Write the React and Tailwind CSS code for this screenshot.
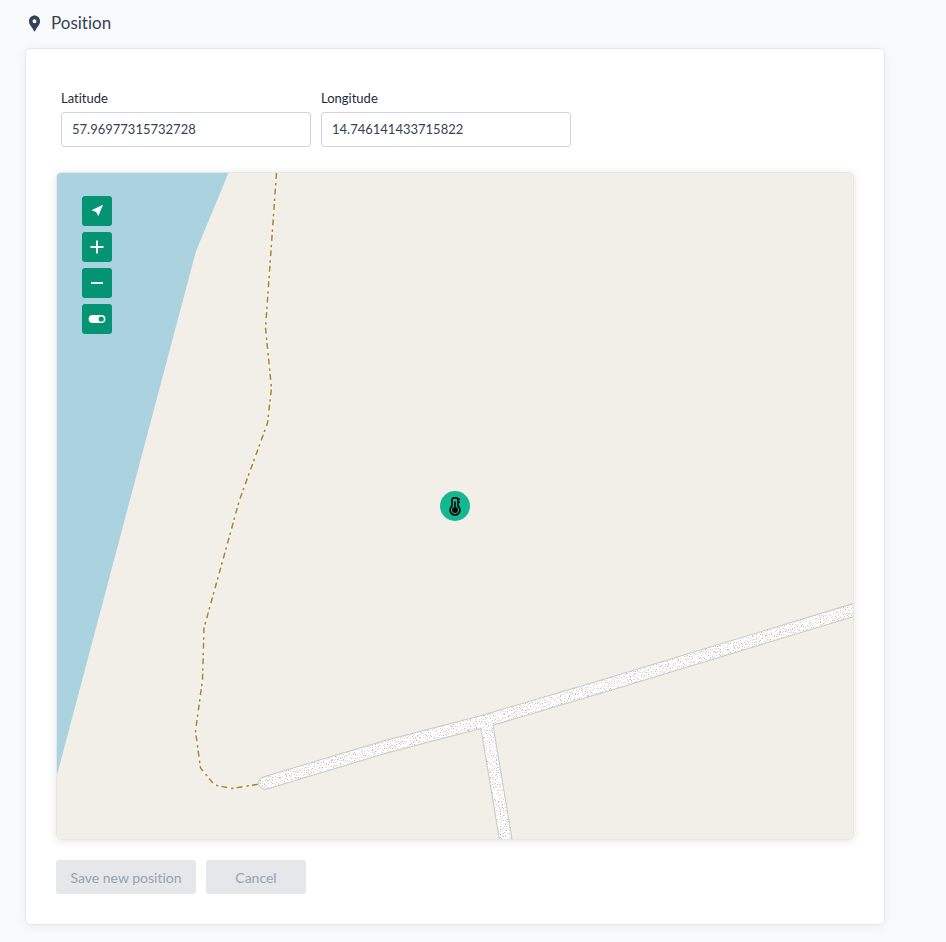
import { useState } from 'react'
import { MdLocationPin } from 'react-icons/md'

const TRAIL =
  '276.5,173 265.5,328 271.5,388 267.5,423 239.5,500 204,628 202.5,680 195.5,731 200.5,768 214.5,785 232,788.5 263,783.5'

const ROADS = ['M265,783 L385,747 L485,721 L610,684 L870,605', 'M486,721 L507.5,850']

// Gravel texture: one speck per 2x2 cell, nudged and tinted by a small seeded generator
const TILE = 64
const TINTS = ['#bdbdbd', '#cfcfcf', '#dedede', '#dedede', '#ffffff']

function makeSpecks() {
  let seed = 41
  const next = n => {
    seed = (seed * 16807) % 2147483647
    return seed % n
  }
  const specks = []
  for (let y = 0; y < TILE; y += 2) {
    for (let x = 0; x < TILE; x += 2) {
      specks.push({ x: x + next(2), y: y + next(2), fill: TINTS[next(TINTS.length)] })
    }
  }
  return specks
}

const SPECKS = makeSpecks()

function MapCanvas() {
  return (
    <svg
      viewBox="57 173 796 666"
      preserveAspectRatio="xMidYMid slice"
      className="block w-full h-full"
      role="img"
      aria-label="Map"
    >
      <defs>
        <pattern id="gravel" width={TILE} height={TILE} patternUnits="userSpaceOnUse">
          <rect width={TILE} height={TILE} fill="#ffffff" />
          {SPECKS.map((s, i) => (
            <rect key={i} x={s.x} y={s.y} width="1" height="1" fill={s.fill} />
          ))}
        </pattern>
      </defs>
      <rect x="57" y="173" width="796" height="666" fill="#f2efe9" />
      <polygon points="57,173 228.5,173 196,251 57,775" fill="#aad3df" />
      <polyline points={TRAIL} fill="none" stroke="#ffffff" strokeOpacity="0.4" strokeWidth="3" />
      <polyline
        points={TRAIL}
        fill="none"
        stroke="#ac8327"
        strokeWidth="1.5"
        strokeDasharray="6 4 2.5 3"
        strokeLinejoin="round"
      />
      <g fill="none" strokeLinecap="round" strokeLinejoin="round">
        {ROADS.map(d => (
          <path key={d} d={d} stroke="#c8c7c4" strokeWidth="13.5" />
        ))}
        {ROADS.map(d => (
          <path key={d} d={d} stroke="url(#gravel)" strokeWidth="11.5" />
        ))}
      </g>
    </svg>
  )
}

function ThermometerIcon() {
  return (
    <svg className="w-5 h-5" viewBox="0 0 20 20" fill="none" stroke="#000000" strokeWidth="1.6">
      <path d="M7 10.2V4A2.1 2.1 0 0 1 9.1 1.9H10.9A2.1 2.1 0 0 1 13 4V10.2A4.9 4.9 0 1 1 7 10.2Z" />
      <path d="M10 5.5V12" />
      <circle cx="10" cy="14" r="2.9" fill="#000000" stroke="none" />
      <path d="M13 3.2H15M13 6.2H15" strokeWidth="1.4" />
    </svg>
  )
}

const CONTROLS = [
  {
    label: 'Go to position',
    icon: <path d="M16 3.8L11.3 15.3L9.2 11L4.4 9.3Z" fill="#ffffff" />,
  },
  { label: 'Zoom in', icon: <path d="M3.5 10H16.5M10 3.5V16.5" stroke="#ffffff" strokeWidth="1.8" /> },
  { label: 'Zoom out', icon: <path d="M4 10H16" stroke="#ffffff" strokeWidth="1.8" /> },
  {
    label: 'Toggle layer',
    icon: (
      <>
        <rect x="1.6" y="5.9" width="16.8" height="8.2" rx="4.1" fill="#ffffff" />
        <circle cx="14.2" cy="10" r="2.6" fill="#059473" />
      </>
    ),
  },
]

function CoordinateField({ id, label, value, onChange }) {
  return (
    <div className="w-[250px]">
      <label htmlFor={id} className="block mb-1 text-[13px] leading-5 text-gray-800">
        {label}
      </label>
      <input
        id={id}
        type="text"
        value={value}
        onChange={e => onChange(e.target.value)}
        className="block w-full h-[35px] px-2.5 pb-0.5 text-[13px] text-gray-700 bg-white border border-gray-300 rounded-[3px]"
      />
    </div>
  )
}

export default function App() {
  const [latitude, setLatitude] = useState('57.96977315732728')
  const [longitude, setLongitude] = useState('14.746141433715822')

  return (
    <div className="min-h-screen bg-[#f9fafc] pt-2 pb-4 px-[25px] font-['Lato',sans-serif] [font-variant-ligatures:none]">
      <div className="max-w-[860px]">
        <h2 className="flex items-center h-[30px] mb-2.5 gap-[7px] text-[17px] text-gray-700">
          <MdLocationPin className="w-[19px] h-[19px]" />
          Position
        </h2>

        <section className="p-[30px] bg-white border border-gray-200 rounded-[5px] shadow-[0_2px_12px_rgba(0,0,0,0.06)]">
          <div className="flex flex-wrap gap-2.5 px-[5px] pt-[9px] mb-[25px]">
            <CoordinateField id="latitude" label="Latitude" value={latitude} onChange={setLatitude} />
            <CoordinateField id="longitude" label="Longitude" value={longitude} onChange={setLongitude} />
          </div>

          <div className="relative aspect-[798/668] border border-gray-200 rounded-[5px] overflow-hidden shadow-[0_1px_8px_rgba(0,0,0,0.1)]">
            <MapCanvas />
            <div className="absolute left-[25px] top-[23px] flex flex-col gap-1.5">
              {CONTROLS.map(c => (
                <button
                  key={c.label}
                  type="button"
                  aria-label={c.label}
                  className="flex items-center justify-center w-[30px] h-[30px] bg-[#059473] rounded-[3px]"
                >
                  <svg className="w-5 h-5" viewBox="0 0 20 20" fill="none">
                    {c.icon}
                  </svg>
                </button>
              ))}
            </div>
            <div className="absolute left-1/2 top-1/2 -translate-x-1/2 -translate-y-1/2 flex items-center justify-center w-[30px] h-[30px] bg-[#13b890] rounded-full">
              <ThermometerIcon />
            </div>
          </div>

          <div className="flex gap-2.5 mt-5">
            <button
              type="button"
              disabled
              className="w-[140px] h-[34px] text-[14px] text-gray-400 bg-gray-200 rounded-[3px]"
            >
              Save new position
            </button>
            <button
              type="button"
              disabled
              className="w-[100px] h-[34px] text-[14px] text-gray-400 bg-gray-200 rounded-[3px]"
            >
              Cancel
            </button>
          </div>
        </section>
      </div>
    </div>
  )
}
